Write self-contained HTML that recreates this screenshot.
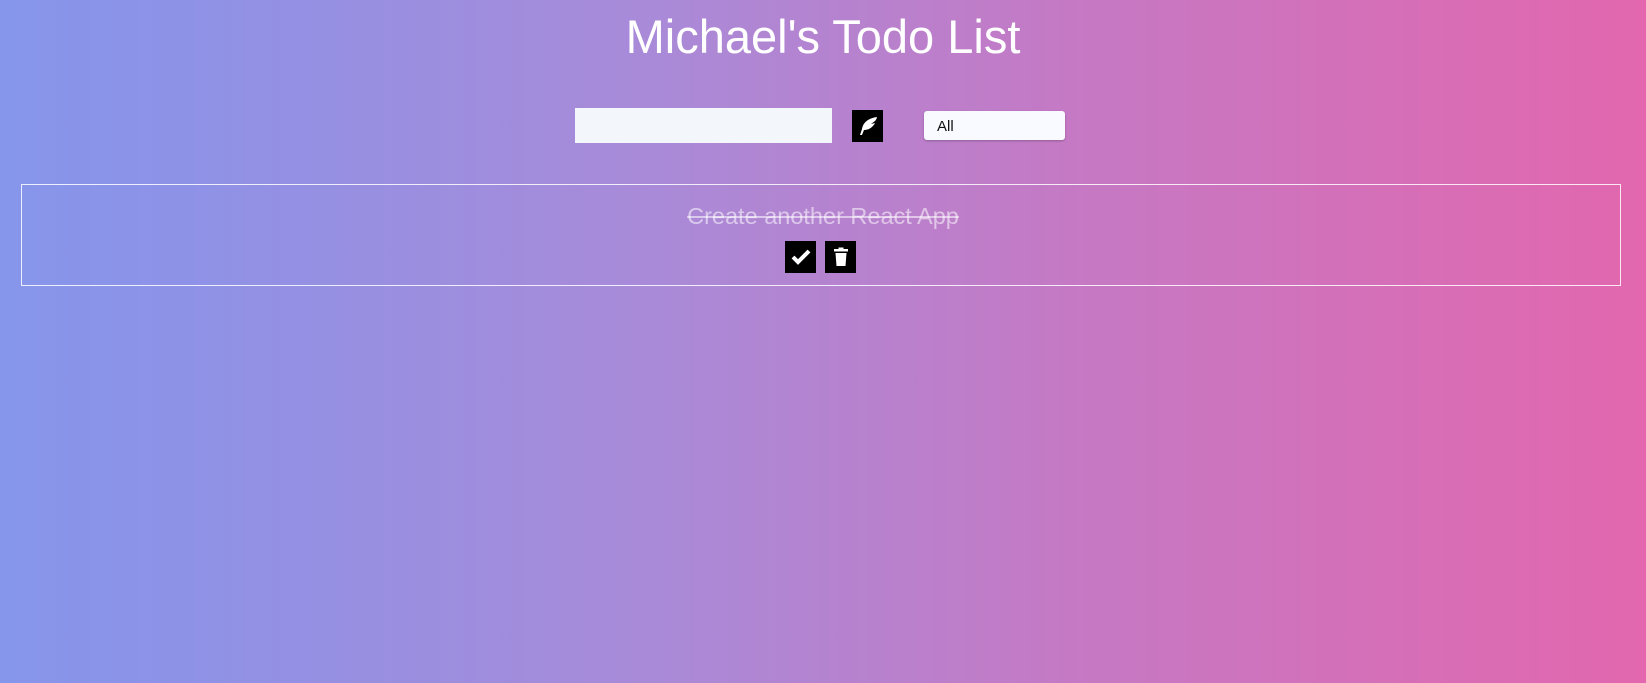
<!DOCTYPE html>
<html><head><style>
html,body{margin:0;width:1646px;height:683px;overflow:hidden}
body{background:linear-gradient(90deg,#8696ea 0%,#8b93e8 8%,#a98ad8 40%,#c579c4 65%,#e267ae 100%);font-family:"Liberation Sans",sans-serif;position:relative}
h1{position:absolute;top:7px;left:0;width:1646px;text-align:center;margin:0;font-weight:normal;color:#fff;font-size:47px;line-height:60px}
.inp{position:absolute;left:575px;top:108px;width:257px;height:35px;background:#f3f6fb}
.btn{position:absolute;background:#000;width:31px;height:32px;display:flex;align-items:center;justify-content:center}
.sel{position:absolute;left:924px;top:111px;width:141px;height:29px;background:#f9faff;border-radius:3px;box-shadow:0 1px 2px rgba(0,0,0,.25);font-size:15px;line-height:31px;padding-left:13px;box-sizing:border-box;color:#111}
.box{position:absolute;left:21px;top:184px;width:1598px;height:100px;border:1px solid rgba(255,255,255,.85)}
.txt{position:absolute;top:203px;left:0;width:1646px;text-align:center;color:rgba(255,255,255,.55);font-size:23.5px;text-decoration:line-through}
</style></head><body>
<h1>Michael's Todo List</h1>
<div class="inp"></div>
<div class="btn" style="left:852px;top:110px"><svg width="22" height="22" viewBox="0 0 22 22"><path d="M20 2C12 3 6 7 5 14L3 20 5 20 7 15C12 15 16 12 18 8L14 9 18 6C19 5 20 3 20 2Z" fill="#fff"/></svg></div>
<div class="sel">All</div>
<div class="box"></div>
<div class="txt">Create another React App</div>
<div class="btn" style="left:785px;top:241px"><svg width="22" height="18" viewBox="0 0 22 18"><path d="M3 9L8 14 19 3" stroke="#fff" stroke-width="4" fill="none"/></svg></div>
<div class="btn" style="left:825px;top:241px"><svg width="16" height="20" viewBox="0 0 16 20"><rect x="1" y="2" width="14" height="2.5" fill="#fff"/><rect x="5.5" y="0.5" width="5" height="2" fill="#fff"/><path d="M2.5 6H13.5L12.5 19H3.5Z" fill="#fff"/></svg></div>
</body></html>
